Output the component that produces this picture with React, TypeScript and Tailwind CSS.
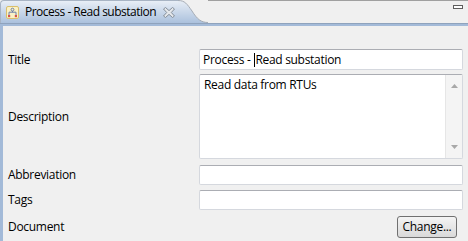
import React from 'react';

const TabIcon = () => (
  <svg width="13" height="13" viewBox="0 0 13 13" className="shrink-0">
    <rect x="0.5" y="0.5" width="12" height="12" rx="1.5" fill="#fbf1c4" stroke="#d9bf6c" />
    <circle cx="6.5" cy="3.6" r="1.4" fill="none" stroke="#6a7fa8" strokeWidth="1" />
    <path d="M3 9 V6.2 H10 V9" fill="none" stroke="#6a7fa8" strokeWidth="1" />
    <path d="M6.5 5 V6.2" stroke="#6a7fa8" strokeWidth="1" />
    <rect x="2" y="9" width="2.2" height="2.2" fill="#d8534a" />
    <rect x="8.8" y="9" width="2.2" height="2.2" fill="#d8534a" />
  </svg>
);

const CloseIcon = () => (
  <svg width="12" height="11" viewBox="0 0 12 11" className="block shrink-0">
    <path
      d="M0.5 2 L2.5 0.5 L6 3.6 L9.5 0.5 L11.5 2 L8.3 5.5 L11.5 9 L9.5 10.5 L6 7.4 L2.5 10.5 L0.5 9 L3.7 5.5 Z"
      fill="#e4e7eb"
      stroke="#858e99"
      strokeWidth="1"
      strokeLinejoin="round"
    />
  </svg>
);

const Field: React.FC<{ label: string; children: React.ReactNode; className?: string }> = ({
  label,
  children,
  className = '',
}) => (
  <div className={`grid grid-cols-[191px_264px] items-center ${className}`}>
    <span className="leading-none">{label}</span>
    {children}
  </div>
);

const inputBox = 'bg-white border border-[#d5d8de] border-t-[#abadb3] rounded-[2px]';

export default function App() {
  return (
    <div className="w-[468px] h-[241px] bg-[#f0f0f0] text-[12px] tracking-[-0.3px] text-black font-['Segoe_UI','Open_Sans','Noto_Sans',sans-serif] overflow-hidden flex flex-col">
      <div className="flex h-[23px] shrink-0">
        <div className="w-[178px] shrink-0 flex items-center pl-[5px] border-t border-l border-[#a8b4c4] rounded-tl-[4px] bg-gradient-to-b from-[#e8eef6] to-[#abc1dd]">
          <TabIcon />
          <span className="ml-[6px] leading-none whitespace-nowrap tracking-[-0.5px]">Process - Read substation</span>
          <span className="ml-[7px] mt-px shrink-0">
            <CloseIcon />
          </span>
        </div>
        <svg width="30" height="23" viewBox="0 0 30 23" className="shrink-0">
          <defs>
            <linearGradient id="tabg" x1="0" y1="0" x2="0" y2="1">
              <stop offset="0" stopColor="#e8eef6" />
              <stop offset="1" stopColor="#abc1dd" />
            </linearGradient>
          </defs>
          <path d="M0 0.5 C7 0.5 9 4 14 11 C19 19 23 22.5 30 22.5 V23 H0 Z" fill="url(#tabg)" />
          <path d="M0 0.5 C7 0.5 9 4 14 11 C19 19 23 22.5 30 22.5" fill="none" stroke="#a5acb5" strokeWidth="1" />
        </svg>
        <div className="flex-1 border-t border-[#a0a0a0] flex justify-end items-start pt-[4px] pr-[5px]">
          <div className="w-[10px] h-[4px] border border-[#5e5e5e] bg-white" />
        </div>
      </div>
      <div className="h-px bg-[#8fa3bd] shrink-0" />
      <div className="h-[2px] bg-[#a3bad8] shrink-0" />

      <div className="flex-1 border-l-[3px] border-[#a3bad8] pl-[5px] pt-[23px] flex flex-col">
        <Field label="Title">
          <div className={`${inputBox} h-[21px] border-[#7f9db9] flex items-center px-[3px]`}>
            <span className="leading-none whitespace-pre">Process - </span>
            <span className="w-px h-[14px] bg-black ml-[1px]" />
            <span className="leading-none whitespace-pre">Read substation</span>
          </div>
        </Field>
        <Field label="Description" className="mt-[4px]">
          <div className={`${inputBox} h-[85px] flex`}>
            <div className="flex-1 pl-[4px] pt-[3px] leading-[14px]">Read data from RTUs</div>
            <div className="w-[17px] bg-[#f4f4f4] border-l border-[#e6e6e6] flex flex-col justify-between items-center py-[9px]">
              <svg width="7" height="4" viewBox="0 0 7 4">
                <path d="M0 4 L3.5 0 L7 4 Z" fill="#a8a8a8" />
              </svg>
              <svg width="7" height="4" viewBox="0 0 7 4">
                <path d="M0 0 L3.5 4 L7 0 Z" fill="#a8a8a8" />
              </svg>
            </div>
          </div>
        </Field>
        <Field label="Abbreviation" className="mt-[6px]">
          <div className={`${inputBox} h-[20px]`} />
        </Field>
        <Field label="Tags" className="mt-[5px]">
          <div className={`${inputBox} h-[20px]`} />
        </Field>
        <Field label="Document" className="mt-[6px]">
          <div className="flex justify-end pr-[6px]">
            <button className="w-[60px] h-[22px] border border-[#707070] rounded-[3px] bg-gradient-to-b from-[#f4f4f4] to-[#d9d9d9] leading-none">
              Change...
            </button>
          </div>
        </Field>
      </div>
    </div>
  );
}
